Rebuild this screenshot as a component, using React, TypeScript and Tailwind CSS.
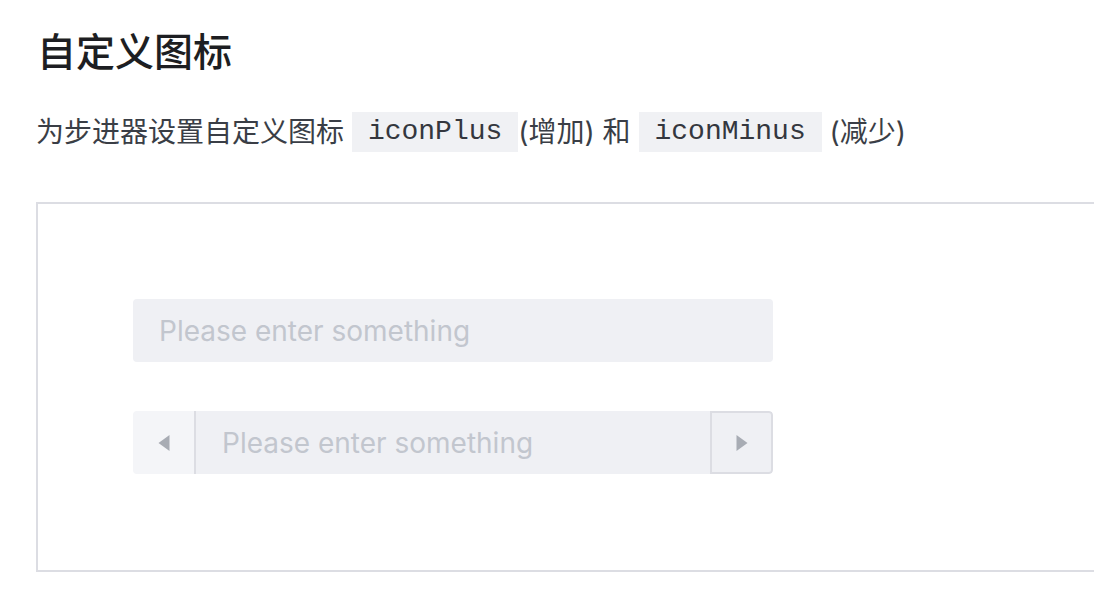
import React from 'react';

const sans = { fontFamily: 'Inter, "Noto Sans CJK SC", sans-serif' };

// ── Small pieces ──────────────────────────────────────────────────────────────

function Code({ children }: { children: React.ReactNode }) {
  return (
    <code className="inline-block h-10 px-4 leading-10 bg-[#f0f1f4] text-[28px] text-[#34373e] font-['Liberation_Mono',monospace] align-top">
      {children}
    </code>
  );
}

function Triangle({ dir }: { dir: 'left' | 'right' }) {
  return (
    <svg width="12" height="18" viewBox="0 0 12 18" className="fill-[#a8acb4]">
      {dir === 'left' ? <polygon points="11.5,1 11.5,17 0.5,9" /> : <polygon points="0.5,1 0.5,17 11.5,9" />}
    </svg>
  );
}

// ── Page ──────────────────────────────────────────────────────────────────────

export default function App() {
  return (
    <div className="w-[1094px] h-[590px] overflow-hidden bg-white pl-[37px] pt-[26px]" style={sans}>
      <h2 className="text-[39px] leading-[52px] font-medium text-[#1d1e22]">自定义图标</h2>

      <p className="mt-[34px] -ml-px text-[28px] leading-10 text-[#3a3e46] whitespace-nowrap">
        为步进器设置自定义图标 <Code>iconPlus</Code>(增加) 和 <Code>iconMinus</Code> (减少)
      </p>

      <div className="mt-[50px] -ml-px w-[1100px] border-2 border-[#dcdde3] px-[95px] pt-[95px] pb-[96px]">
        {/* Plain input */}
        <div className="w-[640px] h-[63px] rounded-[4px] bg-[#eff0f4] flex items-center px-[26px]">
          <span className="text-[28px] text-[#c2c6ce]">Please enter something</span>
        </div>

        {/* Stepper input */}
        <div className="mt-[49px] w-[640px] h-[63px] flex rounded-[4px] overflow-hidden">
          <div className="w-[63px] bg-[#f4f5f8] border-r-2 border-[#dcdde3] flex items-center justify-center">
            <Triangle dir="left" />
          </div>
          <div className="flex-1 bg-[#eff0f4] flex items-center px-[26px]">
            <span className="text-[28px] text-[#c2c6ce]">Please enter something</span>
          </div>
          <div className="w-[63px] bg-[#eff0f4] border-2 border-[#dcdde3] rounded-r-[4px] flex items-center justify-center">
            <Triangle dir="right" />
          </div>
        </div>
      </div>
    </div>
  );
}
